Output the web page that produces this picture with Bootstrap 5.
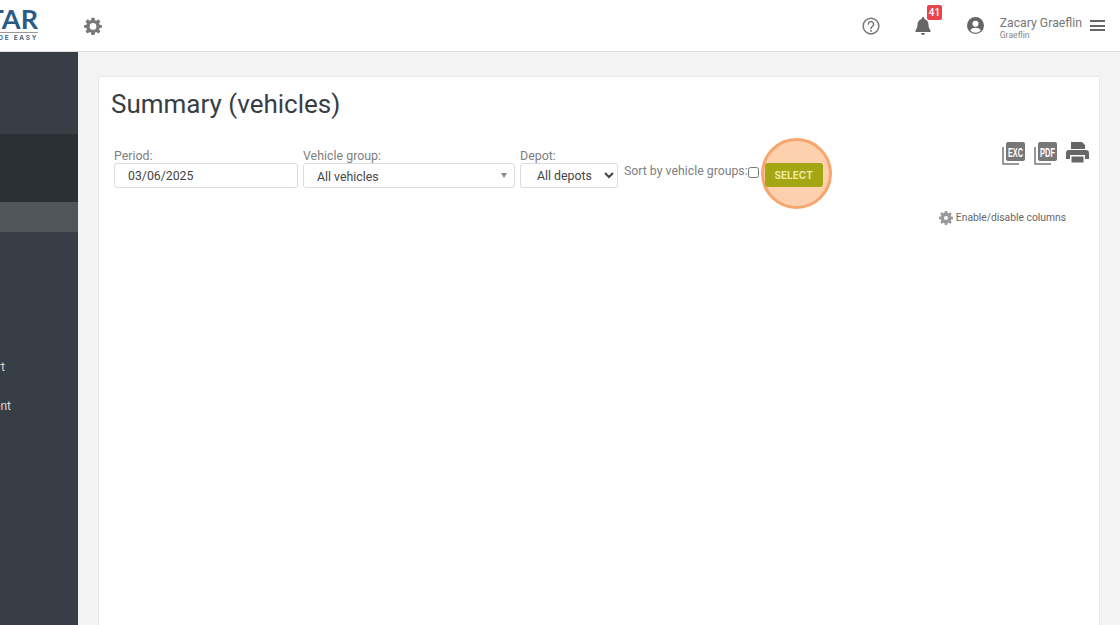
<!DOCTYPE html>
<html lang="en">
<head>
<meta charset="UTF-8">
<meta name="viewport" content="width=device-width, initial-scale=1.0">
<title>Summary (vehicles)</title>
<link rel="stylesheet" href="https://cdn.jsdelivr.net/npm/bootstrap@5.3.0/dist/css/bootstrap.min.css">
<style>
    html, body { height: 100%; overflow: hidden; }
    body { font-family: Roboto, "Liberation Sans", sans-serif; background: #f3f3f3; color: #777; font-size: 12.3px; }
    .top-bar { height: 52px; background: #fff; border-bottom: 1px solid #dedede; }
    .logo-box { width: 38px; overflow: hidden; margin-top: 8px; height: 34px; }
    .logo-main { font-family: Lato, "Liberation Sans", sans-serif; font-weight: 700; font-size: 27px; line-height: 22px; color: #2b5a85; border-bottom: 1px solid #999; height: 25px; white-space: nowrap; }
    .logo-sub { font-family: Inter, sans-serif; font-size: 6.5px; font-weight: 600; letter-spacing: 1.7px; color: #3a5a78; line-height: 9px; margin-top: 1px; white-space: nowrap; }
    .gear-top { margin-left: 46px; }
    .top-right { margin-left: auto; }
    .help-icon { margin-right: 35px; }
    .bell-wrap { position: relative; margin-right: 36px; }
    .bell-count { position: absolute; top: -12px; left: 12px; background: #e9434e; color: #fff; font-size: 10px; font-weight: 500; line-height: 15px; padding: 0 2px; border-radius: 2px; }
    .user-icon { margin-right: 16px; }
    .user-text { margin-top: 5px; }
    .user-name { font-size: 12.25px; line-height: 14px; color: #777; }
    .user-sub { font-size: 8.7px; line-height: 10px; color: #888; }
    .burger { margin-left: 8px; margin-right: 15px; width: 15px; }
    .burger span { display: block; height: 2px; background: #666; margin: 2.5px 0; }
    .page-body { height: 573px; overflow: hidden; }
    .side-bar { width: 78px; background: #373e46; flex-shrink: 0; overflow: hidden; color: #d8d8d8; }
    .side-gap1 { height: 82px; }
    .side-dark { height: 68px; background: #2b3034; }
    .side-active { height: 30px; background: #4e565c; }
    .side-gap2 { height: 116px; }
    .side-link { height: 39px; font-size: 12px; line-height: 39px; white-space: nowrap; display: flex; justify-content: flex-end; }
    .side-link.l1 { padding-right: 73px; }
    .side-link.l2 { padding-right: 67px; }
    .main-area { padding: 24px 20px 0; flex-grow: 1; }
    .sheet { background: #fff; border: 1px solid #e6e6e6; border-radius: 2px; height: 640px; padding: 11px 12px 0; position: relative; }
    .sheet-title { font-size: 26px; font-weight: 400; color: #373e46; line-height: 32px; margin: 0; }
    .filter-row { margin-top: 28px; padding-left: 3px; }
    .filter-label { font-size: 12.4px; line-height: 15px; color: #808080; display: block; margin: 0; }
    .field-box { height: 25px; border: 1px solid #dcdcdc; border-radius: 3px; background: #fff; color: #444; font-size: 12.3px; display: flex; align-items: center; }
    .field-period { width: 184px; padding: 1px 0 0 13px; margin-right: 5px; }
    .field-group { width: 212px; padding: 0 7px 0 13px; margin-right: 5px; justify-content: space-between; }
    .field-group span { padding-top: 3px; }
    .field-group i { display: block; border: 3px solid transparent; border-top: 5px solid #888; border-bottom: 0; }
    .field-depot { width: 98px; height: 25px; padding: 0 0 0 12px; margin-right: 6px; font-size: 12.3px; color: #444; background: #fff; border: 1px solid #dcdcdc; border-radius: 3px; }
    .sort-wrap { padding-top: 16px; height: 40px; white-space: nowrap; color: #808080; font-size: 12.3px; line-height: 15px; display: flex; align-items: flex-start; }
    .sort-wrap input { width: 11px; height: 11px; margin: 3px 0 0 0; }
    .select-wrap { position: relative; margin-left: 6px; margin-top: 15px; }
    .select-ring { position: absolute; left: -4px; top: -25px; width: 71px; height: 71px; border-radius: 50%; background: #fdd0ae; border: 3px solid #f6a66d; }
    .select-btn { position: relative; display: block; width: 58px; height: 24px; padding: 0; background: #a4a614; color: #f3e8a8; border: 0; border-radius: 3px; font-family: Inter, sans-serif; font-size: 10px; font-weight: 700; }
    .doc-icons { position: absolute; top: 65px; right: 10px; gap: 9px; }
    .col-toggle { position: absolute; top: 134px; right: 33px; font-size: 10.3px; color: #666; line-height: 14px; gap: 3px; }
</style>
</head>
<body>

<div class="top-bar d-flex align-items-center">
    <div class="logo-box align-self-start">
        <div class="logo-main d-flex justify-content-end">TAR</div>
        <div class="logo-sub d-flex justify-content-end">MADE EASY</div>
    </div>
    <svg class="gear-top" width="18" height="18" viewBox="0 0 24 24" fill="#777"><path fill-rule="evenodd" d="M10 1h4l.6 3.2 1.900.8 2.700-1.900 2.700 2.800-1.900 2.600.8 1.900L24 11v3l-3.200.6-.8 1.900 1.900 2.700-2.700 2.700-2.700-1.900-1.900.8L14 24h-4l-.6-3.200-1.900-.8-2.700 1.900-2.700-2.700 1.900-2.700-.8-1.900L0 14v-3l3.200-.6.800-1.900-1.900-2.600 2.700-2.800 2.700 1.900 1.900-.8zM12 8a4.500 4.500 0 1 0 0 9 4.500 4.500 0 0 0 0-9z"/></svg>
    <div class="top-right d-flex align-items-center">
        <svg class="help-icon" width="18" height="18" viewBox="0 0 24 24" fill="none" stroke="#777" stroke-width="2"><circle cx="12" cy="12" r="10.500"/><path d="M8.500 9.500a3.500 3.500 0 1 1 5.500 3c-1.300.8-2 1.400-2 2.800" stroke-linecap="round"/><circle cx="12" cy="18.500" r="1.300" fill="#777" stroke="none"/></svg>
        <div class="bell-wrap d-flex">
            <svg width="16" height="18" viewBox="0 0 16 18" fill="#666"><path d="M8 0a1.300 1.300 0 0 0-1.300 1.300v.7C4.200 2.600 2.500 4.700 2.500 7.300c0 3.500-.9 4.700-2 6V15h15v-1.700c-1.100-1.300-2-2.500-2-6 0-2.600-1.700-4.700-4.200-5.300v-.7A1.300 1.300 0 0 0 8 0zM6 16a2 2 0 0 0 4 0z"/></svg>
            <span class="bell-count">41</span>
        </div>
        <svg class="user-icon" width="17" height="17" viewBox="0 0 24 24"><circle cx="12" cy="12" r="12" fill="#666"/><circle cx="12" cy="9.500" r="4.300" fill="#fff"/><path d="M4.500 19c1.500-3 4.500-4 7.500-4s6 1 7.500 4a10.500 10.500 0 0 1-15 0z" fill="#fff"/></svg>
        <div class="user-text">
            <div class="user-name">Zacary Graeflin</div>
            <div class="user-sub">Graeflin</div>
        </div>
        <div class="burger"><span></span><span></span><span></span></div>
    </div>
</div>

<div class="page-body d-flex">
    <div class="side-bar">
        <div class="side-gap1"></div>
        <div class="side-dark"></div>
        <div class="side-active"></div>
        <div class="side-gap2"></div>
        <div class="side-link l1">Report</div>
        <div class="side-link l2">Assignment</div>
    </div>
    <div class="main-area">
        <div class="sheet">
            <h1 class="sheet-title">Summary (vehicles)</h1>
            <div class="filter-row d-flex align-items-start">
                <div>
                    <label class="filter-label">Period:</label>
                    <div class="field-box field-period">03/06/2025</div>
                </div>
                <div>
                    <label class="filter-label">Vehicle group:</label>
                    <div class="field-box field-group"><span>All vehicles</span> <i></i></div>
                </div>
                <div>
                    <label class="filter-label">Depot:</label>
                    <select class="field-depot">
                        <option>All depots</option>
                    </select>
                </div>
                <div class="sort-wrap">Sort by vehicle groups:<input type="checkbox"></div>
                <div class="select-wrap">
                    <div class="select-ring"></div>
                    <button type="button" class="select-btn">SELECT</button>
                </div>
            </div>
            <div class="doc-icons d-flex align-items-start">
                <svg width="23" height="23" viewBox="0 0 23 23"><path d="M1 5v17h16" fill="none" stroke="#777" stroke-width="1.500"/><rect x="4" y="0" width="19" height="19" rx="2" fill="#777"/><text x="13.500" y="14.500" text-anchor="middle" font-family="Liberation Sans, sans-serif" font-weight="700" font-size="12" fill="#fff" textLength="15" lengthAdjust="spacingAndGlyphs">EXC</text></svg>
                <svg width="23" height="23" viewBox="0 0 23 23"><path d="M1 5v17h16" fill="none" stroke="#777" stroke-width="1.500"/><rect x="4" y="0" width="19" height="19" rx="2" fill="#777"/><text x="13.500" y="14.500" text-anchor="middle" font-family="Liberation Sans, sans-serif" font-weight="700" font-size="12" fill="#fff" textLength="15" lengthAdjust="spacingAndGlyphs">PDF</text></svg>
                <svg width="23" height="21" viewBox="0 0 23 21" fill="#666"><path d="M5 0h11l3 3v4H5z"/><path fill-rule="evenodd" d="M3 8h17a3 3 0 0 1 3 3v6h-4v-4H4v4H0v-6a3 3 0 0 1 3-3z"/><rect x="5.500" y="14.500" width="12" height="6"/></svg>
            </div>
            <div class="col-toggle d-flex align-items-center">
                <svg width="14" height="14" viewBox="0 0 24 24" fill="#999"><path fill-rule="evenodd" d="M10 0h4l.6 3.200 1.900.8 2.700-1.900 2.700 2.800-1.900 2.600.8 1.900L24 10v4l-3.200.6-.8 1.900 1.900 2.700-2.700 2.700-2.700-1.900-1.900.8L14 24h-4l-.6-3.200-1.900-.8-2.700 1.900-2.700-2.700 1.900-2.700-.8-1.900L0 14v-4l3.200-.6.800-1.900-1.900-2.600 2.700-2.800 2.700 1.900 1.900-.8zM12 8.500a3.500 3.500 0 1 0 0 7 3.500 3.500 0 0 0 0-7z"/></svg>
                Enable/disable columns
            </div>
        </div>
    </div>
</div>

<script src="https://cdn.jsdelivr.net/npm/bootstrap@5.3.0/dist/js/bootstrap.bundle.min.js"></script>
</body>
</html>
